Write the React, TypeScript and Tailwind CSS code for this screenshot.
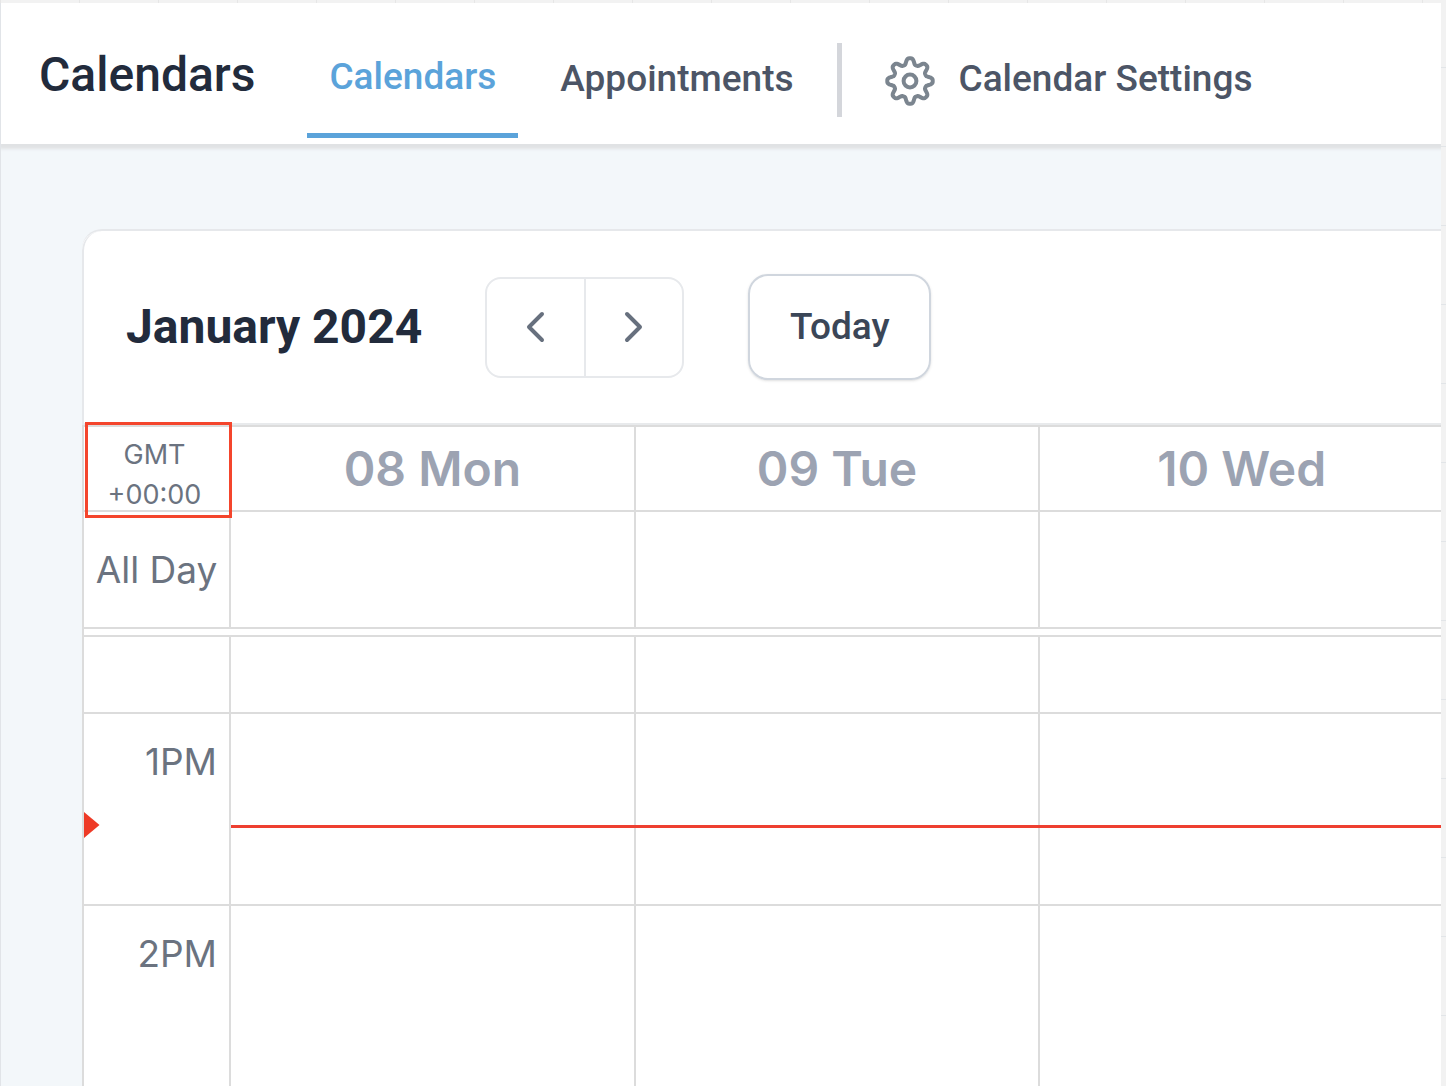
import React from "react";

const days = ["08 Mon", "09 Tue", "10 Wed"];

const gearOutline =
  Array.from({ length: 240 }, (_, i) => {
    const angle = (i / 240) * Math.PI * 2;
    const radius = 19.7 + 3.4 * Math.cos(8 * angle) - 0.4 * Math.cos(24 * angle);
    const x = 25 + radius * Math.cos(angle);
    const y = 25 + radius * Math.sin(angle);
    return `${i === 0 ? "M" : "L"}${x.toFixed(2)} ${y.toFixed(2)}`;
  }).join("") + "Z";

function GearIcon() {
  return (
    <svg viewBox="0 0 50 50" className="size-[50px] text-[#7b858f]" fill="none" stroke="currentColor" strokeWidth="4" strokeLinejoin="round" aria-hidden="true">
      <path d={gearOutline} />
      <circle cx="25" cy="25" r="6.4" />
    </svg>
  );
}

function Chevron({ d }: { d: string }) {
  return (
    <svg viewBox="0 0 20 32" className="h-8 w-5" fill="none" stroke="currentColor" strokeWidth="4" strokeLinecap="round" strokeLinejoin="round" aria-hidden="true">
      <path d={d} />
    </svg>
  );
}

function Header() {
  return (
    <header className="relative z-10 flex h-[141px] items-stretch bg-white font-[Roboto,sans-serif] font-medium shadow-[0_3px_3px_2px_#e0e2e4]">
      <h1 className="mt-9 ml-[38px] text-[48px] leading-[72px] text-[#222b3c]">Calendars</h1>
      <nav className="flex items-stretch text-[37px] leading-[56px] text-[#4c5566]">
        <a href="#calendars" className="mt-[46px] ml-[52px] h-[89px] border-b-[5px] border-[#5ba3da] px-[22px] text-[#5ba3da]">
          Calendars
        </a>
        <a href="#appointments" className="mt-12 ml-[42px]">Appointments</a>
        <span className="mt-10 ml-[43px] h-[74px] w-[5px] bg-[#d4d6db]" />
        <a href="#settings" className="mt-12 ml-[43px] flex h-[60px] items-center gap-6">
          <GearIcon />
          <span className="-mt-1">Calendar Settings</span>
        </a>
      </nav>
    </header>
  );
}

function Toolbar() {
  return (
    <div className="flex h-[194px] items-center border-b-2 border-[#e8eaec] font-[Roboto,sans-serif]">
      <h2 className="ml-[42px] text-[48px] leading-[72px] font-bold text-[#222b3c]">January 2024</h2>
      <div className="ml-[63px] flex h-[101px] w-[199px] divide-x-2 divide-[#e7e9ec] rounded-2xl border-2 border-[#e7e9ec] text-[#67707e]">
        <button type="button" aria-label="Previous" className="flex flex-1 items-center justify-center">
          <Chevron d="M17 3 4 16l13 13" />
        </button>
        <button type="button" aria-label="Next" className="flex flex-1 items-center justify-center">
          <Chevron d="M3 3l13 13L3 29" />
        </button>
      </div>
      <button type="button" className="ml-16 h-[106px] w-[183px] rounded-[20px] border-2 border-[#d0d6de] text-[37px] font-medium text-[#3b4657] shadow-sm">
        Today
      </button>
    </div>
  );
}

function DayCells({ now = false }: { now?: boolean }) {
  return (
    <>
      {days.map((day) => (
        <td key={day} className="relative border-r-2 border-b-2 border-[#dcdcdc] p-0">
          {now && <span className="absolute top-[111px] -right-0.5 left-0 h-[3px] bg-[#ee3f30]" />}
        </td>
      ))}
    </>
  );
}

function WeekTable() {
  const label = "relative border-r-2 border-b-2 border-[#dcdcdc] p-0 pr-3 align-top text-right font-normal";
  return (
    <div className="-mr-1 -ml-0.5 border-l-2 border-[#dcdcdc]">
      <table className="w-full table-fixed border-separate border-spacing-0 border-t-2 border-[#dcdcdc] font-[Inter,sans-serif] text-[37px] leading-[56px] text-[#6b7380]">
        <colgroup>
          <col className="w-[147px]" />
          <col />
          <col />
          <col />
        </colgroup>
        <thead>
          <tr className="h-[85px]">
            <th scope="col" className="relative border-r-2 border-b-2 border-[#dcdcdc] p-0 text-[27px] leading-10 font-normal">
              <div className="-mb-2 pt-1 pr-1">GMT<br />+00:00</div>
              <span className="absolute -top-[5px] -right-[3px] left-px h-[96px] border-3 border-[#f4452c]" />
            </th>
            {days.map((day) => (
              <th key={day} scope="col" className="border-r-2 border-b-2 border-[#dcdcdc] p-0 text-[48px] font-semibold text-[#9ca3b2]">
                {day}
              </th>
            ))}
          </tr>
        </thead>
        <tbody>
          <tr className="h-[117px]">
            <th scope="row" className="border-r-2 border-b-2 border-[#dcdcdc] p-0 text-center font-normal whitespace-nowrap">All Day</th>
            <DayCells />
          </tr>
          <tr className="h-2">
            <td colSpan={4} className="border-b-2 border-[#dcdcdc] p-0" />
          </tr>
          <tr className="h-[77px]">
            <td className={label} />
            <DayCells />
          </tr>
          <tr className="h-48">
            <th scope="row" className={label}>
              <div className="mt-5">1PM</div>
              <svg viewBox="0 0 16 26" className="absolute top-[98px] left-0 h-[26px] w-4" aria-hidden="true">
                <path d="M0 0 15.500 13 0 26z" fill="#ee3a26" />
              </svg>
            </th>
            <DayCells now />
          </tr>
          <tr className="h-[193px]">
            <th scope="row" className={label}>
              <div className="mt-5">2PM</div>
            </th>
            <DayCells />
          </tr>
        </tbody>
      </table>
    </div>
  );
}

export default function App() {
  return (
    <div className="h-screen overflow-hidden bg-[#f2f2f2] bg-[repeating-linear-gradient(90deg,#e6e6e6_0_1px,transparent_1px_79px)] pt-[3px]">
      <div className="flex h-full bg-[repeating-linear-gradient(180deg,#f2f2f2_0_64px,#e2e5e8_64px_65px,#f2f2f2_65px_79px)]">
        <div className="mr-[5px] min-w-0 flex-1 overflow-hidden border-l border-[#e1e4e8] bg-[#f3f7fa]">
          <Header />
          <main className="pt-[85px] pl-[81px]">
            <section className="overflow-hidden rounded-tl-[20px] border-t-2 border-[#e6e8eb] bg-white">
              <div className="rounded-tl-[20px] border-l-2 border-[#e6e8eb]">
                <Toolbar />
                <WeekTable />
              </div>
            </section>
          </main>
        </div>
      </div>
    </div>
  );
}
